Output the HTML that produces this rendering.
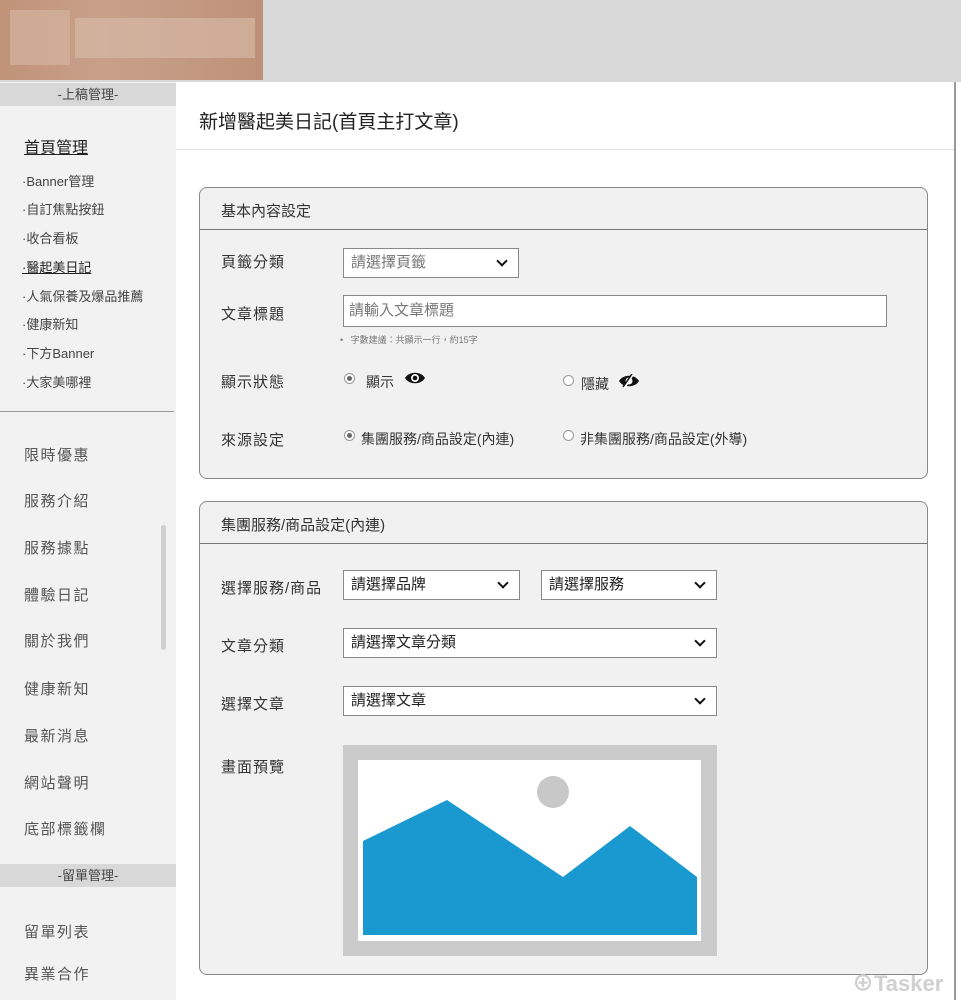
<!DOCTYPE html>
<html><head><meta charset="utf-8"><style>
*{box-sizing:border-box;margin:0;padding:0}
body{width:961px;height:1000px;overflow:hidden;background:#fff;font-family:"Liberation Sans","Noto Sans CJK TC",sans-serif;color:#222;position:relative}
.a{position:absolute;white-space:nowrap}
.top{left:0;top:0;width:961px;height:82px;background:#d8d8d8}
.logo{left:0;top:0;width:263px;height:80px;background:linear-gradient(90deg,#c09378,#c8a08a 40%,#be9278);}
.side{left:0;top:82px;width:176px;height:918px;background:#f2f2f2}
.bar{left:0;width:176px;height:23px;background:#d8d8d8;font-size:13px;color:#444;text-align:center;line-height:23px}
.s{left:22px;font-size:13px;color:#444}
.m{left:24px;font-size:15px;color:#555;letter-spacing:1.5px}
.panel{left:199px;width:729px;background:#f1f1f1;border:1px solid #888;border-radius:8px}
.ph{position:absolute;left:0;right:0;height:42px;border-bottom:1px solid #777;font-size:15px;line-height:48px;padding-left:21px;color:#333}
.lb{left:221px;font-size:15px;color:#333;letter-spacing:1px}
.sel{background:#fff;border:1px solid #888;font-size:15px;color:#222;padding-left:7px;line-height:27px}
.sel:after{content:"";position:absolute;right:12px;top:8px;width:6px;height:6px;border-right:2.5px solid #111;border-bottom:2.5px solid #111;transform:rotate(45deg)}
.rad{width:11px;height:11px;border:1px solid #999;border-radius:50%;background:#fff}
.rad.on:after{content:"";position:absolute;left:2px;top:2px;width:5px;height:5px;border-radius:50%;background:#666}
.t{font-size:14px;color:#333}
</style></head><body>
<div class="a top"></div>
<div class="a logo"><div class="a" style="left:10px;top:10px;width:60px;height:55px;background:#d4b3a0;opacity:.7"></div><div class="a" style="left:75px;top:18px;width:180px;height:40px;background:#d9bcab;opacity:.6"></div></div>
<div class="a side"></div>
<div class="a bar" style="top:83px">-上稿管理-</div>
<div class="a" style="left:24px;top:134px;font-size:16px;color:#222;text-decoration:underline">首頁管理</div>
<div class="a s" style="top:171px">·Banner管理</div>
<div class="a s" style="top:199px">·自訂焦點按鈕</div>
<div class="a s" style="top:228px">·收合看板</div>
<div class="a s" style="top:257px;color:#222;text-decoration:underline">·醫起美日記</div>
<div class="a s" style="top:286px">·人氣保養及爆品推薦</div>
<div class="a s" style="top:314px">·健康新知</div>
<div class="a s" style="top:343px">·下方Banner</div>
<div class="a s" style="top:372px">·大家美哪裡</div>
<div class="a" style="left:0;top:411px;width:174px;height:1px;background:#999"></div>
<div class="a m" style="top:444px">限時優惠</div>
<div class="a m" style="top:490px">服務介紹</div>
<div class="a m" style="top:537px">服務據點</div>
<div class="a m" style="top:584px">體驗日記</div>
<div class="a m" style="top:630px">關於我們</div>
<div class="a m" style="top:678px">健康新知</div>
<div class="a m" style="top:725px">最新消息</div>
<div class="a m" style="top:772px">網站聲明</div>
<div class="a m" style="top:818px">底部標籤欄</div>
<div class="a" style="left:161px;top:525px;width:5px;height:125px;background:#d0d0d0;border-radius:3px"></div>
<div class="a bar" style="top:864px">-留單管理-</div>
<div class="a m" style="top:921px">留單列表</div>
<div class="a m" style="top:963px">異業合作</div>
<div class="a" style="left:954px;top:82px;width:2px;height:918px;background:#999"></div>
<div class="a" style="left:199px;top:107px;font-size:19px;color:#222">新增醫起美日記(首頁主打文章)</div>
<div class="a" style="left:176px;top:149px;width:778px;height:1px;background:#ddd"></div>

<div class="a panel" style="top:187px;height:292px"><div class="ph">基本內容設定</div></div>
<div class="a lb" style="top:251px">頁籤分類</div>
<div class="a sel" style="left:343px;top:248px;width:176px;height:30px;color:#777">請選擇頁籤</div>
<div class="a lb" style="top:303px">文章標題</div>
<div class="a" style="left:343px;top:295px;width:544px;height:32px;background:#fff;border:1px solid #888;font-size:15px;color:#777;padding-left:5px;line-height:30px">請輸入文章標題</div>
<div class="a" style="left:340px;top:333px;font-size:9px;color:#777">•&nbsp;&nbsp; 字數建議：共顯示一行，約15字</div>
<div class="a lb" style="top:371px">顯示狀態</div>
<div class="a rad on" style="left:344px;top:373px"></div>
<div class="a t" style="left:366px;top:372px">顯示</div>
<svg class="a" style="left:404px;top:371px" width="22" height="14" viewBox="0 0 22 14"><path d="M1 7C5 0 17 0 21 7C17 14 5 14 1 7Z" fill="#111"/><circle cx="11" cy="7" r="4" fill="#fff"/><circle cx="11" cy="7" r="2.3" fill="#111"/></svg>
<div class="a rad" style="left:563px;top:375px"></div>
<div class="a t" style="left:581px;top:374px">隱藏</div>
<svg class="a" style="left:618px;top:374px" width="22" height="14" viewBox="0 0 22 14"><path d="M1 7C5 0 17 0 21 7C17 14 5 14 1 7Z" fill="#111"/><circle cx="11" cy="7" r="3.5" fill="#fff"/><path d="M6 14L15 0" stroke="#fff" stroke-width="2.5"/><path d="M5 13L14 0" stroke="#111" stroke-width="1.5"/></svg>
<div class="a lb" style="top:429px">來源設定</div>
<div class="a rad on" style="left:344px;top:430px"></div>
<div class="a t" style="left:361px;top:429px">集團服務/商品設定(內連)</div>
<div class="a rad" style="left:563px;top:430px"></div>
<div class="a t" style="left:580px;top:429px">非集團服務/商品設定(外導)</div>

<div class="a panel" style="top:501px;height:474px"><div class="ph">集團服務/商品設定(內連)</div></div>
<div class="a lb" style="top:577px">選擇服務/商品</div>
<div class="a sel" style="left:343px;top:570px;width:177px;height:30px">請選擇品牌</div>
<div class="a sel" style="left:541px;top:570px;width:176px;height:30px">請選擇服務</div>
<div class="a lb" style="top:635px">文章分類</div>
<div class="a sel" style="left:343px;top:628px;width:374px;height:30px">請選擇文章分類</div>
<div class="a lb" style="top:693px">選擇文章</div>
<div class="a sel" style="left:343px;top:686px;width:374px;height:30px">請選擇文章</div>
<div class="a lb" style="top:756px">畫面預覽</div>
<svg class="a" style="left:343px;top:745px" width="374" height="211" viewBox="0 0 374 211"><rect width="374" height="211" fill="#cbcbcb"/><rect x="15" y="15" width="343" height="181" fill="#fff"/><circle cx="210" cy="47" r="16" fill="#c8c8c8"/><polygon points="20,96 104,55 220,132 287,81 354,132 354,190 20,190" fill="#1a98d0"/></svg>
<div class="a" style="left:852px;top:966px;font-size:22px;font-weight:bold;color:#d0d0d0">⊕Tasker</div>
</body></html>
